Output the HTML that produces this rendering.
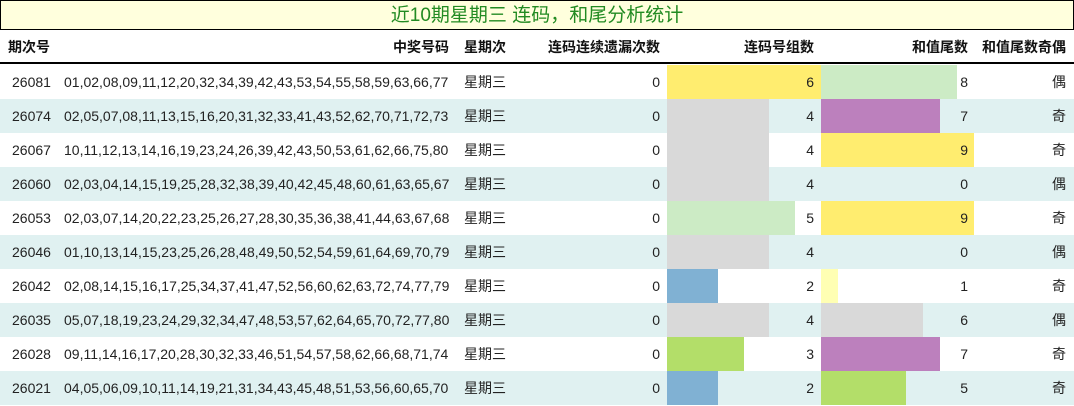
<!DOCTYPE html>
<html><head><meta charset="utf-8"><style>
*{margin:0;padding:0;box-sizing:border-box}
body{width:1074px;height:406px;background:#fff;font-family:"Liberation Sans","Noto Sans CJK SC",sans-serif;font-size:14px;color:#222;position:relative;overflow:hidden}
.title{position:absolute;left:0;top:0;width:1074px;height:30px;background:#ffffdd;border:1px solid #000;color:#228b22;font-size:19px;text-align:center;line-height:29px}
.hd{position:absolute;top:30px;height:34px;width:1074px;border-bottom:2px solid #000;font-weight:bold;color:#111}
.r{position:absolute;left:0;width:1074px;height:34px}
.r.a{background:#e0f1f1}
.t{position:absolute;line-height:34px;white-space:nowrap}
.b{position:absolute;top:0;height:34px}
</style></head><body>
<div class="title">近10期星期三 连码，和尾分析统计</div>
<div class="hd">
<span class="t" style="left:8px">期次号</span>
<span class="t" style="right:625px">中奖号码</span>
<span class="t" style="left:464px">星期次</span>
<span class="t" style="right:414px">连码连续遗漏次数</span>
<span class="t" style="right:260px">连码号组数</span>
<span class="t" style="right:106px">和值尾数</span>
<span class="t" style="right:8px">和值尾数奇偶</span>
</div>
<div id="rows"></div>
<script>
var d=[["26081","01,02,08,09,11,12,20,32,34,39,42,43,53,54,55,58,59,63,66,77",6,8,"偶"],
["26074","02,05,07,08,11,13,15,16,20,31,32,33,41,43,52,62,70,71,72,73",4,7,"奇"],
["26067","10,11,12,13,14,16,19,23,24,26,39,42,43,50,53,61,62,66,75,80",4,9,"奇"],
["26060","02,03,04,14,15,19,25,28,32,38,39,40,42,45,48,60,61,63,65,67",4,0,"偶"],
["26053","02,03,07,14,20,22,23,25,26,27,28,30,35,36,38,41,44,63,67,68",5,9,"奇"],
["26046","01,10,13,14,15,23,25,26,28,48,49,50,52,54,59,61,64,69,70,79",4,0,"偶"],
["26042","02,08,14,15,16,17,25,34,37,41,47,52,56,60,62,63,72,74,77,79",2,1,"奇"],
["26035","05,07,18,19,23,24,29,32,34,47,48,53,57,62,64,65,70,72,77,80",4,6,"偶"],
["26028","09,11,14,16,17,20,28,30,32,33,46,51,54,57,58,62,66,68,71,74",3,7,"奇"],
["26021","04,05,06,09,10,11,14,19,21,31,34,43,45,48,51,53,56,60,65,70",2,5,"奇"]];
var lc={2:"#80b1d3",3:"#b3de69",4:"#d9d9d9",5:"#ccebc5",6:"#ffed6f"};
var hc={1:"#ffffb3",5:"#b3de69",6:"#d9d9d9",7:"#bc80bd",8:"#ccebc5",9:"#ffed6f"};
var h="";
d.forEach(function(r,i){
var y=65+i*34;
h+='<div class="r'+(i%2?' a':'')+'" style="top:'+y+'px">';
h+='<div class="b" style="left:667px;width:'+Math.round(r[2]*25.6)+'px;background:'+lc[r[2]]+'"></div>';
if(r[3])h+='<div class="b" style="left:821px;width:'+(r[3]*17)+'px;background:'+hc[r[3]]+'"></div>';
h+='<span class="t" style="left:12px">'+r[0]+'</span>';
h+='<span class="t" style="left:64px">'+r[1]+'</span>';
h+='<span class="t" style="left:464px">星期三</span>';
h+='<span class="t" style="right:414px">0</span>';
h+='<span class="t" style="right:260px">'+r[2]+'</span>';
h+='<span class="t" style="right:106px">'+r[3]+'</span>';
h+='<span class="t" style="right:8px">'+r[4]+'</span>';
h+='</div>';
});
document.getElementById("rows").innerHTML=h;
</script>
</body></html>
